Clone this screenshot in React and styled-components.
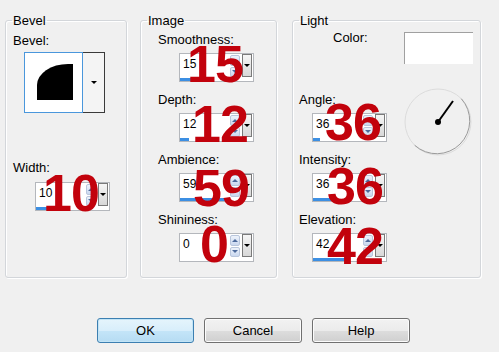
import React from "react";
import styled, { createGlobalStyle } from "styled-components";

const GlobalStyle = createGlobalStyle`
  html, body {
    margin: 0;
    padding: 0;
    background: #f0f0f0;
  }
  body {
    font-family: "Liberation Sans", Arial, sans-serif;
    font-size: 13px;
    color: #000;
  }
`;

const Dialog = styled.div`
  width: 499px;
  height: 352px;
  box-sizing: border-box;
  padding: 13px 0 0 5px;
  display: flex;
  flex-direction: column;
  overflow: hidden;
`;

const Groups = styled.div`
  display: flex;
  align-items: flex-start;
`;

const Group = styled.fieldset`
  box-sizing: border-box;
  width: ${p => p.$w}px;
  height: 265px;
  margin: 0 ${p => p.$gap || 0}px 0 0;
  padding: 0;
  min-width: 0;
  border: 1px solid #d3d6da;
  border-radius: 3px;
  box-shadow: inset 1px 1px 0 #fff, 1px 1px 0 #fff;
`;

const Legend = styled.legend`
  margin-left: 6px;
  padding: 0 1px;
  font-size: 13px;
  line-height: 15px;
`;

const Column = styled.div`
  display: flex;
  flex-direction: column;
  align-items: flex-start;
  padding-left: ${p => p.$pad}px;
`;

const LightBody = styled.div`
  display: grid;
  grid-template-columns: 105px 69px;
  align-items: start;
  padding-left: 6px;
`;

const Label = styled.div`
  font-size: 13px;
  line-height: 15px;
  margin-top: ${p => p.$top || 0}px;
  margin-left: ${p => p.$left || 0}px;
  white-space: nowrap;
`;

/* bevel preview combo */
const Combo = styled.div`
  display: flex;
  margin: 4px 0 0 11px;
`;

const Preview = styled.div`
  width: 59px;
  height: 61px;
  box-sizing: border-box;
  border: 1px solid #4a97dc;
  background: #fff;
  display: flex;
  align-items: center;
  justify-content: center;
`;

const ComboBtn = styled.div`
  width: 22px;
  height: 61px;
  box-sizing: border-box;
  border: 1px solid #3a3a3a;
  border-left: none;
  background: #f4f4f4;
  display: flex;
  align-items: center;
  justify-content: center;
`;

const DownTri = styled.span`
  width: 0;
  height: 0;
  border-left: ${p => p.$s || 3}px solid transparent;
  border-right: ${p => p.$s || 3}px solid transparent;
  border-top: ${p => p.$s || 3}px solid ${p => p.$c || "#000"};
`;

const UpTri = styled.span`
  width: 0;
  height: 0;
  border-left: 3px solid transparent;
  border-right: 3px solid transparent;
  border-bottom: 3px solid #4d6a9c;
`;

/* numeric spin box */
const SpinWrap = styled.div`
  position: relative;
  width: 75px;
  margin-top: ${p => p.$top}px;
  margin-left: ${p => p.$left || 0}px;
`;

const Spinner = styled.div`
  width: 75px;
  height: 29px;
  box-sizing: border-box;
  border: 1px solid #b4b7bc;
  background: #fff;
  display: flex;
  flex-direction: column;
`;

const SpinTop = styled.div`
  flex: 1;
  display: flex;
`;

const Value = styled.div`
  flex: 1;
  font-size: 12px;
  line-height: 14px;
  padding: 3px 0 0 3px;
`;

const Arrows = styled.div`
  width: 10px;
  display: flex;
  flex-direction: column;
  gap: 1px;
  margin: 1px 2px 1px 0;
`;

const ArrowBtn = styled.div`
  flex: 1;
  box-sizing: border-box;
  border: 1px solid #b9c6dc;
  border-radius: 2px;
  background: linear-gradient(#eef3fb, #c9d7ef);
  display: flex;
  align-items: center;
  justify-content: center;
`;

const DropBtn = styled.div`
  width: 10px;
  box-sizing: border-box;
  margin: 0 1px 1px 0;
  border: 1px solid #7a7a7a;
  background: linear-gradient(#f6f6f6, #d8d8d8);
  display: flex;
  align-items: center;
  justify-content: center;
`;

const Fill = styled.div`
  width: ${p => p.$w}px;
  height: 3px;
  background: #3c8fe3;
`;

const Mark = styled.div`
  position: absolute;
  left: ${p => p.$x}px;
  top: ${p => p.$y}px;
  z-index: 2;
  font-family: "Liberation Sans", Arial, sans-serif;
  font-weight: 700;
  font-size: 52px;
  line-height: 1;
  letter-spacing: -1px;
  color: #c2020c;
  white-space: nowrap;
  pointer-events: none;
`;

const NumberBox = ({ value, fill, mark, dx, dy, top, left }) => (
  <SpinWrap $top={top} $left={left}>
    <Spinner>
      <SpinTop>
        <Value>{value}</Value>
        <Arrows>
          <ArrowBtn><UpTri /></ArrowBtn>
          <ArrowBtn><DownTri $c="#4d6a9c" /></ArrowBtn>
        </Arrows>
        <DropBtn><DownTri /></DropBtn>
      </SpinTop>
      <Fill $w={fill} />
    </Spinner>
    <Mark $x={dx} $y={dy}>{mark}</Mark>
  </SpinWrap>
);

/* light group parts */
const ColorRow = styled.div`
  grid-column: 1 / -1;
  display: flex;
  align-items: flex-start;
`;

const Swatch = styled.div`
  width: 69px;
  height: 32px;
  margin-top: 4px;
  box-sizing: border-box;
  background: #fff;
  border-top: 1px solid #a0a0a0;
  border-left: 1px solid #a0a0a0;
`;

const Dial = styled.svg`
  grid-column: 2;
  grid-row: 2 / span 3;
  margin-top: 24px;
`;

const LeftCell = styled.div`
  grid-column: 1;
`;

/* buttons */
const ButtonRow = styled.div`
  display: flex;
  gap: 10px;
  margin-top: 40px;
  padding-left: 92px;
`;

const Button = styled.button`
  width: ${p => p.$w}px;
  height: 25px;
  box-sizing: border-box;
  padding: 0;
  font-family: "Liberation Sans", Arial, sans-serif;
  font-size: 13px;
  color: #000;
  border-radius: 3px;
  border: 1px solid ${p => (p.$primary ? "#3c7fb1" : "#707070")};
  background: ${p =>
    p.$primary
      ? "linear-gradient(#e5f4fc, #d8eefb 50%, #c4e5f8 51%, #b6dcf3)"
      : "linear-gradient(#f2f2f2, #ebebeb 50%, #dddddd 51%, #cfcfcf)"};
  box-shadow: inset 0 0 0 1px ${p => (p.$primary ? "#c2e4f6" : "#fcfcfc")};
`;

export default function App() {
  return (
    <>
      <GlobalStyle />
      <Dialog>
        <Groups>
          <Group $w={122} $gap={13}>
            <Legend>Bevel</Legend>
            <Column $pad={7}>
              <Label $top={5}>Bevel:</Label>
              <Combo>
                <Preview>
                  <svg width="57" height="59" viewBox="0 0 57 59">
                    <path d="M12 47 V32 A31 21 0 0 1 43 11 H48 V47 Z" fill="#000" />
                  </svg>
                </Preview>
                <ComboBtn><DownTri /></ComboBtn>
              </Combo>
              <Label $top={47}>Width:</Label>
              <NumberBox value="10" fill={23} mark="10" dx={8} dy={-15} top={7} left={22} />
            </Column>
          </Group>

          <Group $w={137} $gap={15}>
            <Legend>Image</Legend>
            <Column $pad={17}>
              <Label $top={4}>Smoothness:</Label>
              <NumberBox value="15" fill={12} mark="15" dx={8} dy={-15} top={6} left={21} />
              <Label $top={10}>Depth:</Label>
              <NumberBox value="12" fill={9} mark="12" dx={13} dy={-15} top={6} left={21} />
              <Label $top={10}>Ambience:</Label>
              <NumberBox value="59" fill={46} mark="59" dx={14} dy={-11} top={6} left={21} />
              <Label $top={10}>Shininess:</Label>
              <NumberBox value="0" fill={0} mark="0" dx={21} dy={-15} top={6} left={21} />
            </Column>
          </Group>

          <Group $w={189}>
            <Legend>Light</Legend>
            <LightBody>
              <ColorRow>
                <Label $top={2} $left={34} style={{ width: 71 }}>Color:</Label>
                <Swatch />
              </ColorRow>
              <LeftCell>
                <Label $top={28}>Angle:</Label>
                <NumberBox value="36" fill={7} mark="36" dx={13} dy={-17} top={6} left={13} />
                <Label $top={10}>Intensity:</Label>
                <NumberBox value="36" fill={23} mark="36" dx={15} dy={-13} top={6} left={13} />
                <Label $top={10}>Elevation:</Label>
                <NumberBox value="42" fill={33} mark="42" dx={15} dy={-13} top={6} left={13} />
              </LeftCell>
              <Dial width="68" height="68" viewBox="0 0 68 68">
                <circle cx="34" cy="34" r="33" fill="none" stroke="#dcdcdc" strokeWidth="1" />
                <path d="M57.3 10.7 A33 33 0 0 1 10.7 57.3" fill="none" stroke="#9a9a9a" strokeWidth="1" />
                <line x1="34" y1="34" x2="49" y2="13" stroke="#000" strokeWidth="2" />
                <circle cx="34" cy="34" r="3" fill="#000" />
              </Dial>
            </LightBody>
          </Group>
        </Groups>

        <ButtonRow>
          <Button $w={97} $primary>OK</Button>
          <Button $w={98}>Cancel</Button>
          <Button $w={98}>Help</Button>
        </ButtonRow>
      </Dialog>
    </>
  );
}
